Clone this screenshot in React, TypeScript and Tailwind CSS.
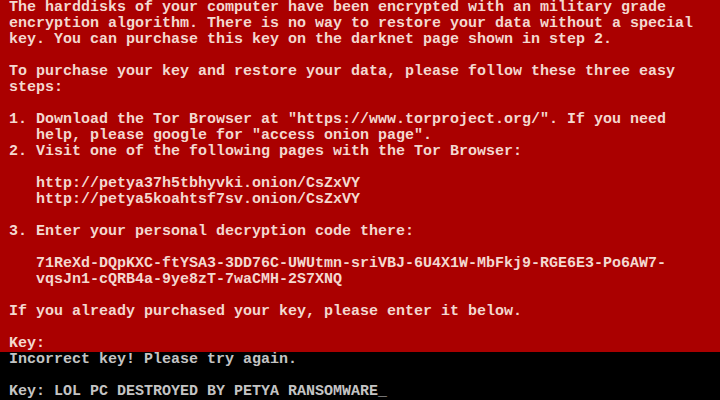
import React from 'react'

const redLines = [
    'The harddisks of your computer have been encrypted with an military grade',
    'encryption algorithm. There is no way to restore your data without a special',
    'key. You can purchase this key on the darknet page shown in step 2.',
    '',
    'To purchase your key and restore your data, please follow these three easy',
    'steps:',
    '',
    '1. Download the Tor Browser at "https://www.torproject.org/". If you need',
    '   help, please google for "access onion page".',
    '2. Visit one of the following pages with the Tor Browser:',
    '',
    '   http://petya37h5tbhyvki.onion/CsZxVY',
    '   http://petya5koahtsf7sv.onion/CsZxVY',
    '',
    '3. Enter your personal decryption code there:',
    '',
    '   71ReXd-DQpKXC-ftYSA3-3DD76C-UWUtmn-sriVBJ-6U4X1W-MbFkj9-RGE6E3-Po6AW7-',
    '   vqsJn1-cQRB4a-9ye8zT-7waCMH-2S7XNQ',
    '',
    'If you already purchased your key, please enter it below.',
    '',
    'Key:',
]

const blackLines = [
    'Incorrect key! Please try again.',
    '',
    'Key: LOL PC DESTROYED BY PETYA RANSOMWARE_',
]

const App = () => {
    return (
        <div className="w-[720px] h-[400px] overflow-hidden font-['Liberation_Mono',monospace] text-[15px] leading-[16px] font-bold">
            {/* red screen */}
            <div className="bg-[#aa0000] text-[#f4d8d0] px-[9px] h-[352px]">
                {redLines.map((line, i) => (
                    <div key={i} className="h-[16px] whitespace-pre">
                        {line}
                    </div>
                ))}
            </div>

            {/* input area */}
            <div className="bg-black text-[#c4c4c4] px-[9px] h-[48px]">
                {blackLines.map((line, i) => (
                    <div key={i} className="h-[16px] whitespace-pre">
                        {line}
                    </div>
                ))}
            </div>
        </div>
    )
}

export default App
